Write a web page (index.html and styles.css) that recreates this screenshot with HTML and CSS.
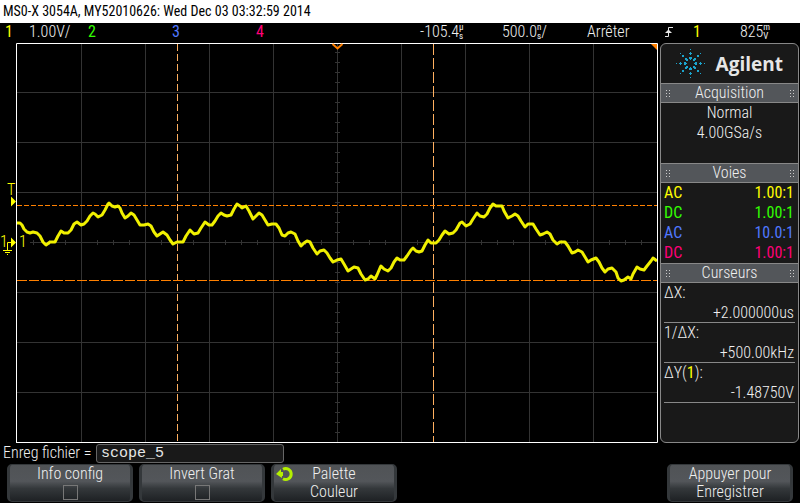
FILE: index.html
```html
<!DOCTYPE html>
<html lang="fr">
<head>
<meta charset="utf-8">
<title>MSO-X 3054A</title>
<link rel="stylesheet" href="styles.css">
</head>
<body>
<div class="scope">
  <header class="title">MS0-X 3054A, MY52010626: Wed Dec 03 03:32:59 2014</header>
  <div class="status">
    <span class="ch1">1</span>
    <span>1.00V/</span>
    <span class="ch2">2</span>
    <span class="ch3">3</span>
    <span class="ch4">4</span>
    <span class="reading">-105.4<span class="unit"><i>µ</i><i>s</i></span></span>
    <span class="reading">500.0<span class="unit"><i>n</i><i>s</i></span>/</span>
    <span>Arrêter</span>
    <svg class="edge" viewBox="0 0 9 12" width="9" height="12"><path d="M0 10.500H3.500V1.500H8"/><path class="edge-tip" d="M0 7L3.500 3.500L7 7Z"/></svg>
    <span class="ch1">1</span>
    <span class="reading">825<span class="unit"><i>m</i><i>V</i></span></span>
  </div>
  <main class="main">
    <svg class="plot" viewBox="0 0 658 400" role="img" aria-label="Voie 1">
      <defs>
        <pattern id="hticks" x="17" y="197" width="16" height="5" patternUnits="userSpaceOnUse"><path class="grid" d="M.5 0V5"/></pattern>
        <pattern id="vticks" x="335" y="-1" width="5" height="10" patternUnits="userSpaceOnUse"><path class="grid" d="M0 .5H5"/></pattern>
      </defs>
      <path class="grid" d="M81.500 1V399M145.500 1V399M209.500 1V399M273.500 1V399M337.500 1V399M401.500 1V399M465.500 1V399M529.500 1V399M593.500 1V399M17 49.500H657M17 99.500H657M17 149.500H657M30 199.500H657M17 249.500H657M17 299.500H657M17 349.500H657"/>
      <rect x="33" y="197" width="624" height="5" fill="url(#hticks)"/>
      <rect x="335" y="5" width="5" height="390" fill="url(#vticks)"/>
      <path class="cursor-x" stroke-dasharray="7 3" d="M177.500 1V399"/>
      <path class="cursor-x" stroke-dasharray="11 3" d="M433.500 1V399"/>
      <path class="cursor-y" stroke-dasharray="5 2" d="M17 162.500H657"/>
      <path class="cursor-y" stroke-dasharray="10 2" d="M17 237.500H657"/>
      <g transform="translate(0 -43)">
        <polyline class="trace" points="17,223 20,223 22,225 24,229 27,232 30,233 33,232 37,233 40,236 43,242 46,245 50,242 55,242 58,236 61,231 64,233 68,233 71,230 74,224 77,222 81,225 84,224 87,221 90,216 93,213 95,214 98,217 102,215 105,210 108,204 109,203 112,206 115,207 118,206 120,208 122,213 125,218 128,216 131,213 134,215 137,220 140,225 144,225 148,224 151,226 154,232 157,236 160,234 163,232 167,235 170,240 173,244 177,242 183,242 186,236 190,230 194,234 198,233 201,228 205,222 209,225 212,225 215,221 218,216 221,213 224,215 227,216 231,215 234,209 237,204 240,206 242,208 246,206 249,211 253,219 256,216 259,213 262,215 265,220 268,225 272,224 276,224 279,228 282,235 285,236 288,233 291,232 295,234 298,241 301,246 304,243 307,241 310,242 313,248 317,254 320,251 324,250 327,253 330,258 333,262 337,260 341,259 344,264 348,271 351,269 354,267 358,268 361,274 365,280 368,279 371,276 375,279 377,275 380,268 381,266 384,269 388,271 391,268 394,262 397,258 400,260 404,260 407,256 411,250 413,248 416,251 419,252 422,251 425,245 428,240 431,243 436,243 439,240 442,235 445,231 449,234 453,233 456,230 460,223 462,222 466,226 470,224 473,219 477,213 480,216 484,217 487,214 490,208 493,204 496,206 502,206 504,211 508,218 512,216 515,214 518,216 521,221 525,227 528,224 533,224 536,229 540,235 543,234 547,232 550,234 553,240 557,244 560,242 565,242 568,246 572,253 575,252 578,250 582,252 585,257 588,262 591,260 596,258 599,262 602,268 605,272 608,269 612,268 616,272 618,278 621,281 624,280 628,277 631,279 633,274 637,267 640,269 644,270 647,266 651,261 653,258 657,261"/>
      </g>
      <path class="frame" d="M16.500 400V.5H657.500V399.500H16"/>
      <path class="time-ref" d="M332.500 1L337.500 5.500L342.500 1"/>
      <path class="corner" d="M651 1H657V7Z"/>
      <path class="marker" d="M11 153.500V163.500L16 158.500ZM11 194.500V204.500L16 199.500Z"/>
      <path class="ground" d="M11 199.500H7.500V207M3 207.500H12M5 209.500H10M7 211.500H8"/>
      <text class="tag" x="7" y="152">T</text>
      <text class="tag" x="0" y="204">1</text>
      <rect x="18" y="192" width="12" height="14"/>
      <text class="tag" x="19" y="204">1</text>
    </svg>
    <aside class="side">
      <div class="brand">
        <svg class="spark" viewBox="0 0 29 29" width="29" height="29">
          <defs>
            <path id="spoke" d="M14 0H15V1H14ZM14 3H15V4H16V5H15V6H14V5H13V4H14ZM13 8H16V10H15V11H14V10H13ZM17 10H18V9H20V11H19V12H17ZM21 6H23V8H21ZM24 4H25V5H24Z"/>
          </defs>
          <use href="#spoke"/>
          <use href="#spoke" transform="rotate(90 14.5 14.5)"/>
          <use href="#spoke" transform="rotate(180 14.5 14.5)"/>
          <use href="#spoke" transform="rotate(270 14.5 14.5)"/>
        </svg>
        <span>Agilent</span>
      </div>
      <h2 class="bar"><i class="grip"></i>Acquisition<i class="grip"></i></h2>
      <div class="acq"><p>Normal</p><p>4.00GSa/s</p></div>
      <h2 class="bar"><i class="grip"></i>Voies<i class="grip"></i></h2>
      <table class="channels">
        <tr class="ch1"><td>AC</td><td>1.00:1</td></tr>
        <tr class="ch2"><td>DC</td><td>1.00:1</td></tr>
        <tr class="ch3"><td>AC</td><td>10.0:1</td></tr>
        <tr class="ch4"><td>DC</td><td>1.00:1</td></tr>
      </table>
      <h2 class="bar"><i class="grip"></i>Curseurs<i class="grip"></i></h2>
      <dl class="cursors">
        <div><dt>ΔX:</dt><dd>+2.000000us</dd></div>
        <div><dt>1/ΔX:</dt><dd>+500.00kHz</dd></div>
        <div><dt>ΔY(<span class="ch1">1</span>):</dt><dd>-1.48750V</dd></div>
      </dl>
    </aside>
  </main>
  <div class="file">
    <label for="name">Enreg fichier =</label>
    <input id="name" type="text" value="scope_5">
  </div>
  <div class="keys">
    <label class="key">Info config<input type="checkbox"></label>
    <label class="key">Invert Grat<input type="checkbox"></label>
    <button class="key" type="button">
      <svg class="knob" viewBox="0 0 18 16" width="18" height="16"><path class="arc" d="M7 3.200A5.500 5.500 0 1 1 7 12.800"/><path class="tip" d="M0 8L5 3V6H7V10H6V12Z"/></svg>
      <span>Palette</span><span>Couleur</span>
    </button>
    <button class="key last" type="button"><span>Appuyer pour</span><span>Enregistrer</span></button>
  </div>
</div>
</body>
</html>
```
FILE: styles.css
```css
* { box-sizing: border-box; }
body {
  margin: 0;
  background: #000;
  color: #f0f0f0;
  font: 300 16px/20px "Roboto Condensed", "Liberation Sans Narrow", "Liberation Sans", sans-serif;
}
h2, p, dl, dd { margin: 0; font-size: inherit; font-weight: inherit; }
i { font-style: normal; }
.ch1, .ch2, .ch3, .ch4 { font-weight: 400; }
.ch1 { color: #ff0; }
.ch2 { color: #3f0; }
.ch3 { color: #5078ff; }
.ch4 { color: #ff0078; }

.title {
  background: #fff;
  color: #000;
  padding: 1px 3px;
  font-size: 14px;
  font-weight: 400;
  line-height: 21px;
}
.status {
  display: grid;
  grid-template-columns: 24fr 59fr 84fr 84fr 164fr 82fr 85fr 78fr 28fr 47fr 60fr;
  padding-left: 5px;
  height: 20px;
  line-height: 18px;
  white-space: nowrap;
}
.reading { display: flex; }
.unit { display: grid; font-size: 9px; font-weight: 400; line-height: 9px; align-content: start; }
.edge { margin-top: 3px; fill: none; stroke: #e6e6e6; }
.edge-tip { fill: #e6e6e6; stroke: none; }

.main { display: grid; grid-template-columns: 1fr 140px; column-gap: 2px; }
.plot { display: block; width: 100%; }
.grid { stroke: #333; fill: none; }
.cursor-x { stroke: #ffb060; }
.cursor-y { stroke: #ff8000; }
.trace { fill: none; stroke: #f0f000; stroke-width: 3; stroke-linejoin: round; }
.frame { fill: none; stroke: #fff; }
.time-ref { fill: none; stroke: #ff8000; stroke-width: 2; }
.corner { fill: #ff8000; }
.marker, .tag { fill: #ff0; }
.ground { fill: none; stroke: #ff0; }

.side {
  background: #191919;
  border: 1px solid #888;
  border-radius: 6px;
  margin-right: 1px;
}
.brand {
  display: flex;
  align-items: center;
  justify-content: space-between;
  height: 39px;
  padding: 0 15px;
  color: #e6e6e6;
  font: bold 19px "Open Sans", sans-serif;
}
.spark { fill: #1ca4cc; }
.bar {
  display: flex;
  align-items: center;
  justify-content: space-between;
  height: 20px;
  padding: 0 4px;
  background: #53565a;
  border: solid #888;
  border-width: 1px 0;
  line-height: 18px;
}
.grip { width: 5px; height: 8px; background: radial-gradient(circle, #ccc 0 1px, transparent 1px) 0 0 / 3px 3px; }
.acq { height: 60px; text-align: center; }
.channels { width: 100%; border-collapse: collapse; }
.channels td { padding: 0 4px 0 3px; height: 20px; }
.channels td + td { text-align: right; }
.cursors { padding: 0 3px; }
.cursors div { border-bottom: 1px solid #888; height: 40px; }
.cursors dd { text-align: right; line-height: 19px; padding-right: 1px; }

.file { display: flex; gap: 3px; padding: 1px 3px 0; line-height: 18px; }
.file label { flex: 0 0 90px; }
.file input {
  width: 188px;
  height: 19px;
  padding: 0 4px;
  border: 1px solid #666;
  border-radius: 3px;
  background: #191919;
  color: #e6e6e6;
  font: 15px "Liberation Mono", monospace;
}
.keys { display: grid; grid-template-columns: repeat(6, 1fr); gap: 6px; padding: 1px 7px; }
.key {
  position: relative;
  display: flex;
  flex-direction: column;
  align-items: center;
  height: 38px;
  padding: 0;
  border: 2px solid #34383b;
  border-width: 1px 3px;
  border-radius: 5px;
  background: linear-gradient(#505356 0, #53565a 45%, #34383b 65%, #1e2124 100%);
  color: #f0f0f0;
  font: inherit;
  line-height: 18px;
}
.key input { appearance: none; width: 15px; height: 15px; margin: 2px 0 0; border: 1px solid #777; }
.last { grid-column: 6; }
.knob { position: absolute; left: 2px; top: 1px; }
.arc { fill: none; stroke: #b4f000; stroke-width: 3; }
.tip { fill: #b4f000; }
```
